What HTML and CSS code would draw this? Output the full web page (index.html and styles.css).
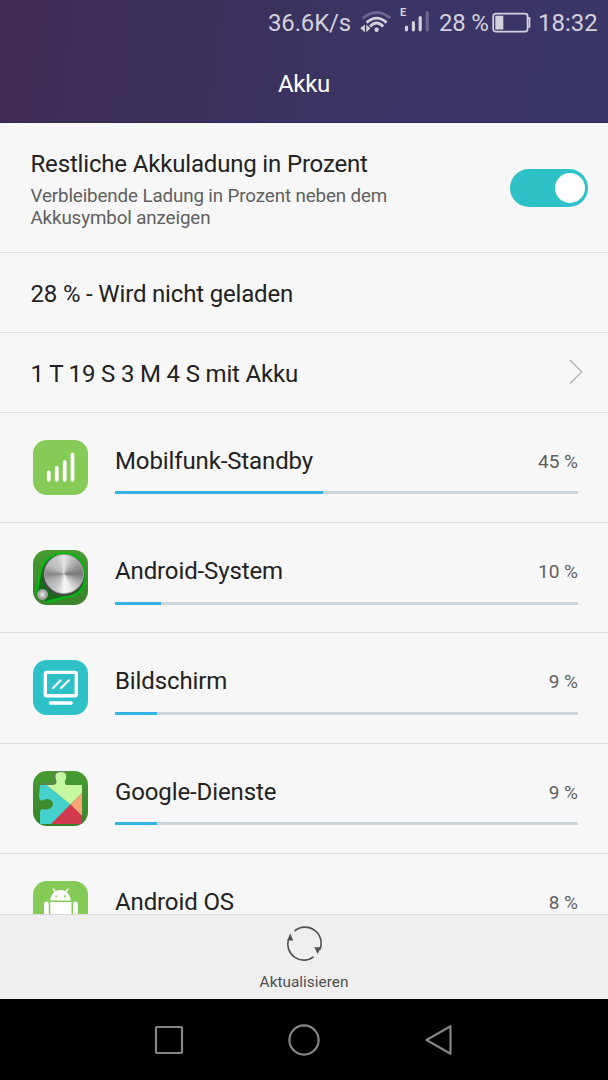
FILE: index.html
```html
<!DOCTYPE html>
<html lang="de">
<head>
<meta charset="utf-8">
<title>Akku</title>
<link rel="stylesheet" href="styles.css">
</head>
<body>
<div class="screen">
  <header class="header">
    <div class="status">
      <span class="speed">36.6K/s</span>
      <svg class="wifi" width="30" height="24" viewBox="0 0 30 24" fill="none" stroke="#d4d0dc" stroke-width="2.8">
        <path d="M1.8 7.3Q15.6-4.3 29.4 7.3" stroke="#6d6690"/>
        <path d="M5.6 11.6Q15.6 2.6 25.6 11.6"/>
        <path d="M9 15.4Q15.6 8.6 22.2 15.4"/>
        <circle cx="15.6" cy="18.7" r="2.2" fill="#d4d0dc" stroke="none"/>
        <path d="M-0.8 17.3L3.9 13.4V21.2ZM9.4 17.3L5.3 13.4V21.2Z" fill="#d4d0dc" stroke="none"/>
      </svg>
      <svg class="cell" width="30" height="28" viewBox="0 0 30 28" stroke-width="3.2" stroke-linecap="round">
        <path d="M6.5 20.2V22.8M13.4 15.6V22.8M20.2 10.6V22.8" stroke="#d4d0dc"/>
        <path d="M27.2 5.6V22.8" stroke="#6d6690"/>
        <text class="cell-type" x="0" y="8.6">E</text>
      </svg>
      <span class="percent">28 %</span>
      <svg class="battery" width="39" height="22" viewBox="0 0 39 22">
        <rect x="1.2" y="1.6" width="34.4" height="18" rx="2.5" fill="none" stroke="#d4d0dc" stroke-width="1.8"/>
        <rect x="3.3" y="3.7" width="8" height="13.8" fill="#d4d0dc"/>
        <path d="M36 6H37.5V15H36" fill="none" stroke="#d4d0dc" stroke-width="1.7"/>
      </svg>
      <span class="clock">18:32</span>
    </div>
    <h1 class="title">Akku</h1>
  </header>

  <main class="list">
    <section class="row setting">
      <div>
        <div class="label">Restliche Akkuladung in Prozent</div>
        <div class="hint">Verbleibende Ladung in Prozent neben dem<br>Akkusymbol anzeigen</div>
      </div>
      <div class="toggle"><span class="knob"></span></div>
    </section>
    <section class="row info"><span class="label">28 % - Wird nicht geladen</span></section>
    <section class="row info">
      <span class="label">1 T 19 S 3 M 4 S mit Akku</span>
      <svg class="chevron" width="16" height="26" viewBox="0 0 16 26" fill="none" stroke="#a9a9a9" stroke-width="1.1"><path d="M2 1L13.8 12.8L2 24.5"/></svg>
    </section>

    <section class="row app">
      <div class="icon green">
        <svg viewBox="0 0 55 55" stroke="#fff" stroke-width="3.8" stroke-linecap="round"><path d="M15.8 32.5V39.8M23.8 28V39.8M31.7 22V39.8M39.5 14.5V39.8"/></svg>
      </div>
      <div class="usage">
        <div class="line"><span class="label">Mobilfunk-Standby</span><span class="value">45 %</span></div>
        <div class="track"><div class="fill" style="width:45%"></div></div>
      </div>
    </section>
    <section class="row app">
      <div class="icon forest">
        <svg viewBox="0 0 55 55" fill="none">
          <path d="M3 44L8 20C12 7 21 3 32 3.5C47 4 53 16 52 29C51 42 42 46 33 47L14 52" fill="#17691a" stroke="#08b411" stroke-width="2.4"/>
          <circle cx="30.5" cy="25" r="21" fill="#444b44"/>
        </svg>
        <span class="metal"></span><span class="metal small"></span>
      </div>
      <div class="usage">
        <div class="line"><span class="label">Android-System</span><span class="value">10 %</span></div>
        <div class="track"><div class="fill" style="width:10%"></div></div>
      </div>
    </section>
    <section class="row app">
      <div class="icon teal">
        <svg viewBox="0 0 55 55" fill="none" stroke="#fff" stroke-linecap="round">
          <rect x="12.3" y="12.4" width="31" height="23.4" rx="1.5" stroke-width="3.4"/>
          <path d="M20 28L27.5 20.5M28 28L35.8 20.5" stroke-width="2.2"/>
          <path d="M17.5 43H38" stroke-width="3.6"/>
        </svg>
      </div>
      <div class="usage">
        <div class="line"><span class="label">Bildschirm</span><span class="value">9 %</span></div>
        <div class="track"><div class="fill" style="width:9%"></div></div>
      </div>
    </section>
    <section class="row app">
      <div class="icon forest">
        <svg viewBox="0 0 55 55">
          <defs><clipPath id="puzzle"><path d="M7 14H20Q24 14 23.5 10Q21 4 24 2Q28 0 32 2Q34.5 5 32 10Q31 14 35 14H49V53H7V41Q8 37 11 38.5Q15 39 18 37Q22 33 18 29Q14 27 10 29.5Q6 30 6 25Z"/></clipPath></defs>
          <path d="M7 13H20Q23 12 22.5 9Q20 4 23 1.5Q28 -1 33 1" fill="none" stroke="#65805a" stroke-width="1.6"/>
          <g clip-path="url(#puzzle)">
            <path d="M0 3L37.5 33.5L17 55H0Z" fill="#44d0cb"/>
            <path d="M13.5 14L37.5 33.5L55 16V0H18Z" fill="#c7f8a1"/>
            <path d="M49 22L37.5 33.5L49 45Z" fill="#fca477"/>
            <path d="M16 55L37.5 33.5L49 45L55 51V55Z" fill="#d2384e"/>
          </g>
        </svg>
      </div>
      <div class="usage">
        <div class="line"><span class="label">Google-Dienste</span><span class="value">9 %</span></div>
        <div class="track"><div class="fill" style="width:9%"></div></div>
      </div>
    </section>
    <section class="row app">
      <div class="icon green">
        <svg viewBox="0 0 55 55" fill="#fff">
          <path d="M17.3 19.5C17.5 13.5 22 9 27.5 9S37.5 13.5 37.7 19.5Z"/>
          <path d="M20.3 8L23 12M35 8L32 12" stroke="#fff" stroke-width="1.5" stroke-linecap="round"/>
          <circle cx="23.2" cy="15.3" r="1" fill="#86ca57"/><circle cx="31.8" cy="15.3" r="1" fill="#86ca57"/>
          <path d="M17.3 21H38.5V44H17.3Z"/>
          <rect x="11" y="20.5" width="4.8" height="18" rx="2.4"/><rect x="40" y="20.5" width="4.8" height="18" rx="2.4"/>
        </svg>
      </div>
      <div class="usage">
        <div class="line"><span class="label">Android OS</span><span class="value">8 %</span></div>
        <div class="track"><div class="fill" style="width:8%"></div></div>
      </div>
    </section>
  </main>

  <footer class="toolbar">
    <svg width="36" height="36" viewBox="0 0 36 36" fill="none" stroke="#505050" stroke-width="1.6">
      <path d="M8.5 5.2A16 16 0 0 1 33.6 24"/>
      <path d="M27.5 30.8A16 16 0 0 1 2.6 13"/>
      <path d="M1.2 14.5L4.2 7.3L7.3 14.5ZM28.3 21.3H34.8L31.8 28Z" fill="#505050" stroke="none"/>
    </svg>
    <span class="refresh">Aktualisieren</span>
  </footer>
  <nav class="navbar">
    <svg width="34" height="34" viewBox="0 0 34 34"><rect x="4" y="4" width="26" height="26" rx="1"/></svg>
    <svg width="34" height="34" viewBox="0 0 34 34"><circle cx="17" cy="17" r="14.6"/></svg>
    <svg width="34" height="34" viewBox="0 0 34 34"><path d="M4.5 17L28.5 3.2V30.8Z"/></svg>
  </nav>
</div>
</body>
</html>
```
FILE: styles.css
```css
* { box-sizing: border-box; }
body { margin: 0; font-family: Roboto, sans-serif; color: #222; }
.screen { width: 608px; height: 1080px; display: flex; flex-direction: column; background: #f7f7f7; overflow: hidden; }
.header { flex: none; height: 123px; background: linear-gradient(97deg, #402b50 0%, #3c2e56 14%, #3c315d 42%, #3a3566 66%, #3b3668 100%); border-bottom: 1px solid #30285a; }
.status { height: 45px; display: flex; align-items: center; padding: 0 10px 0 268px; font-size: 24px; color: #d4d0dc; white-space: nowrap; }
.speed { width: 92px; letter-spacing: -0.15px; }
.wifi { flex: none; margin-left: 1px; overflow: visible; }
.cell { flex: none; margin-left: 9px; margin-top: -3px; }
.cell-type { font: bold 11px Roboto, sans-serif; fill: #d4d0dc; stroke: none; }
.percent { width: 53px; margin-left: 9px; letter-spacing: -0.2px; }
.battery { flex: none; }
.clock { margin-left: 7px; }
.title { margin: 0; font-size: 24px; font-weight: 400; line-height: 78px; letter-spacing: -0.3px; text-align: center; color: #fff; }
.list { flex: 1; min-height: 0; overflow: hidden; }
.row { display: flex; border-bottom: 1px solid #dedede; }
.label { font-size: 24px; line-height: 30px; letter-spacing: -0.17px; white-space: nowrap; }
.setting { height: 130px; justify-content: space-between; padding: 26px 20px 0 30.5px; }
.hint { margin-top: 6px; font-size: 18.8px; line-height: 22px; letter-spacing: -0.13px; color: #606060; white-space: nowrap; }
.toggle { width: 78px; height: 38px; margin-top: 20px; padding: 4px 3.5px; border-radius: 19px; background: #2fc1c8; display: flex; justify-content: flex-end; }
.knob { width: 30px; height: 30px; border-radius: 50%; background: #fff; }
.info { height: 80px; align-items: center; justify-content: space-between; padding: 2px 24px 0 30.5px; }
.chevron { margin-bottom: 3px; }
.app { height: 110.2px; padding: 27px 30px 0 33px; gap: 27px; }
.icon { position: relative; flex: none; width: 55px; height: 55px; border-radius: 14px; overflow: hidden; }
.icon svg { display: block; width: 55px; height: 55px; }
.green { background: #86ca57; }
.teal { background: #2fc1c8; }
.forest { background: linear-gradient(#479b31, #39832b); }
.metal { position: absolute; left: 11px; top: 4px; width: 40px; height: 40px; border-radius: 50%; background: conic-gradient(#e5e5e5, #bbb 30deg, #999 60deg, #777 90deg, #aaa 115deg, #eee 160deg, #f5f5f5 180deg, #ccc 205deg, #aaa 250deg, #858585 270deg, #bbb 300deg, #c8c8c8 335deg, #e5e5e5); border: 1px solid #aaa; }
.metal.small { left: 4px; top: 39px; width: 11px; height: 11px; background: radial-gradient(#eee, #777); }
.usage { flex: 1; padding-top: 9px; }
.line { display: flex; justify-content: space-between; height: 31px; }
.line .label { line-height: 24px; letter-spacing: -0.12px; }
.value { font-size: 19px; line-height: 26px; color: #606060; }
.track { height: 3px; margin-top: 11.4px; background: #ccd5da; }
.fill { height: 3px; background: #34b3e4; }
.toolbar { flex: none; height: 85px; border-top: 1px solid #d9d9d9; background: #efefef; display: flex; flex-direction: column; align-items: center; padding-top: 11px; }
.refresh { margin-top: 10px; font-size: 15.4px; line-height: 20px; color: #505050; }
.navbar { flex: none; height: 81px; background: #000; display: flex; align-items: center; justify-content: center; gap: 101px; }
.navbar svg { fill: none; stroke: #858585; stroke-width: 2.2; stroke-linejoin: round; }
```
